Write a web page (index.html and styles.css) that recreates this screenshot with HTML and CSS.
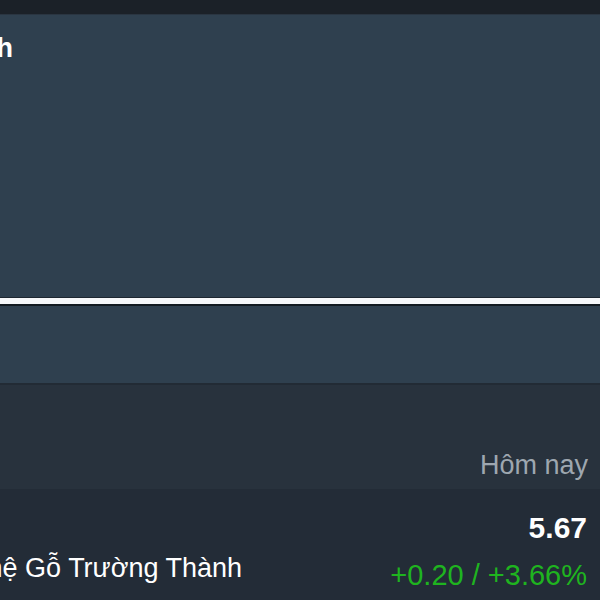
FILE: index.html
```html
<!DOCTYPE html>
<html lang="vi">
<head>
    <meta charset="UTF-8">
    <meta name="viewport" content="width=device-width, initial-scale=1.0">
    <title>Công nghệ Gỗ Trường Thành</title>
    <link rel="stylesheet" href="styles.css">
</head>
<body>
    <div class="topbar"></div>

    <!-- Chart Section -->
    <section class="chart-panel">
        <div class="chart-head">
            <h2 class="chart-title">Công nghệ Gỗ Trường Thành</h2>
        </div>
        <div class="chart-area"></div>
        <div class="chart-axis"></div>
        <div class="chart-foot"></div>
    </section>

    <!-- Quote Section -->
    <section class="quote">
        <div class="quote-head">
            <span class="quote-period">Hôm nay</span>
        </div>
        <div class="quote-row">
            <div class="quote-name">
                <span>Công nghệ Gỗ Trường Thành</span>
            </div>
            <div class="quote-values">
                <div class="quote-price">5.67</div>
                <div class="quote-change up">+0.20 / +3.66%</div>
            </div>
        </div>
    </section>
</body>
</html>
```

FILE: styles.css
```css
html, body { margin: 0; padding: 0; }
body { font-family: "Liberation Sans", Arial, sans-serif; background: #232c37; color: #fff; width: 600px; height: 600px; overflow: hidden; }

.topbar { height: 14px; background: #1b2128; border-bottom: 1px solid #2a3541; }

.chart-panel { background: #2f404f; }
.chart-head { width: 13px; display: flex; justify-content: flex-end; white-space: nowrap; padding-top: 18px; }
.chart-title { margin: 0; font-size: 27px; line-height: 30px; font-weight: bold; }
.chart-area { height: 234px; border-bottom: 1px solid #1d2731; }
.chart-axis { height: 6px; background: #f6f8fa; border-bottom: 2px solid #121a21; }
.chart-foot { height: 77px; border-bottom: 2px solid #222b35; }

.quote-head { height: 104px; background: #28323d; display: flex; align-items: flex-end; justify-content: flex-end; padding: 0 12px 9px 0; box-sizing: border-box; }
.quote-period { font-size: 27px; line-height: 30px; color: #9ea7b0; }

.quote-row { display: flex; justify-content: space-between; align-items: flex-end; padding: 22px 13px 0 0; background: #232c37; }
.quote-name { width: 242px; display: flex; justify-content: flex-end; white-space: nowrap; font-size: 27px; line-height: 30px; margin-bottom: 9px; }
.quote-values { text-align: right; }
.quote-price { font-size: 30px; line-height: 34px; font-weight: bold; margin-bottom: 13px; }
.quote-change { font-size: 29px; line-height: 34px; }
.up { color: #1fb41f; }
```
